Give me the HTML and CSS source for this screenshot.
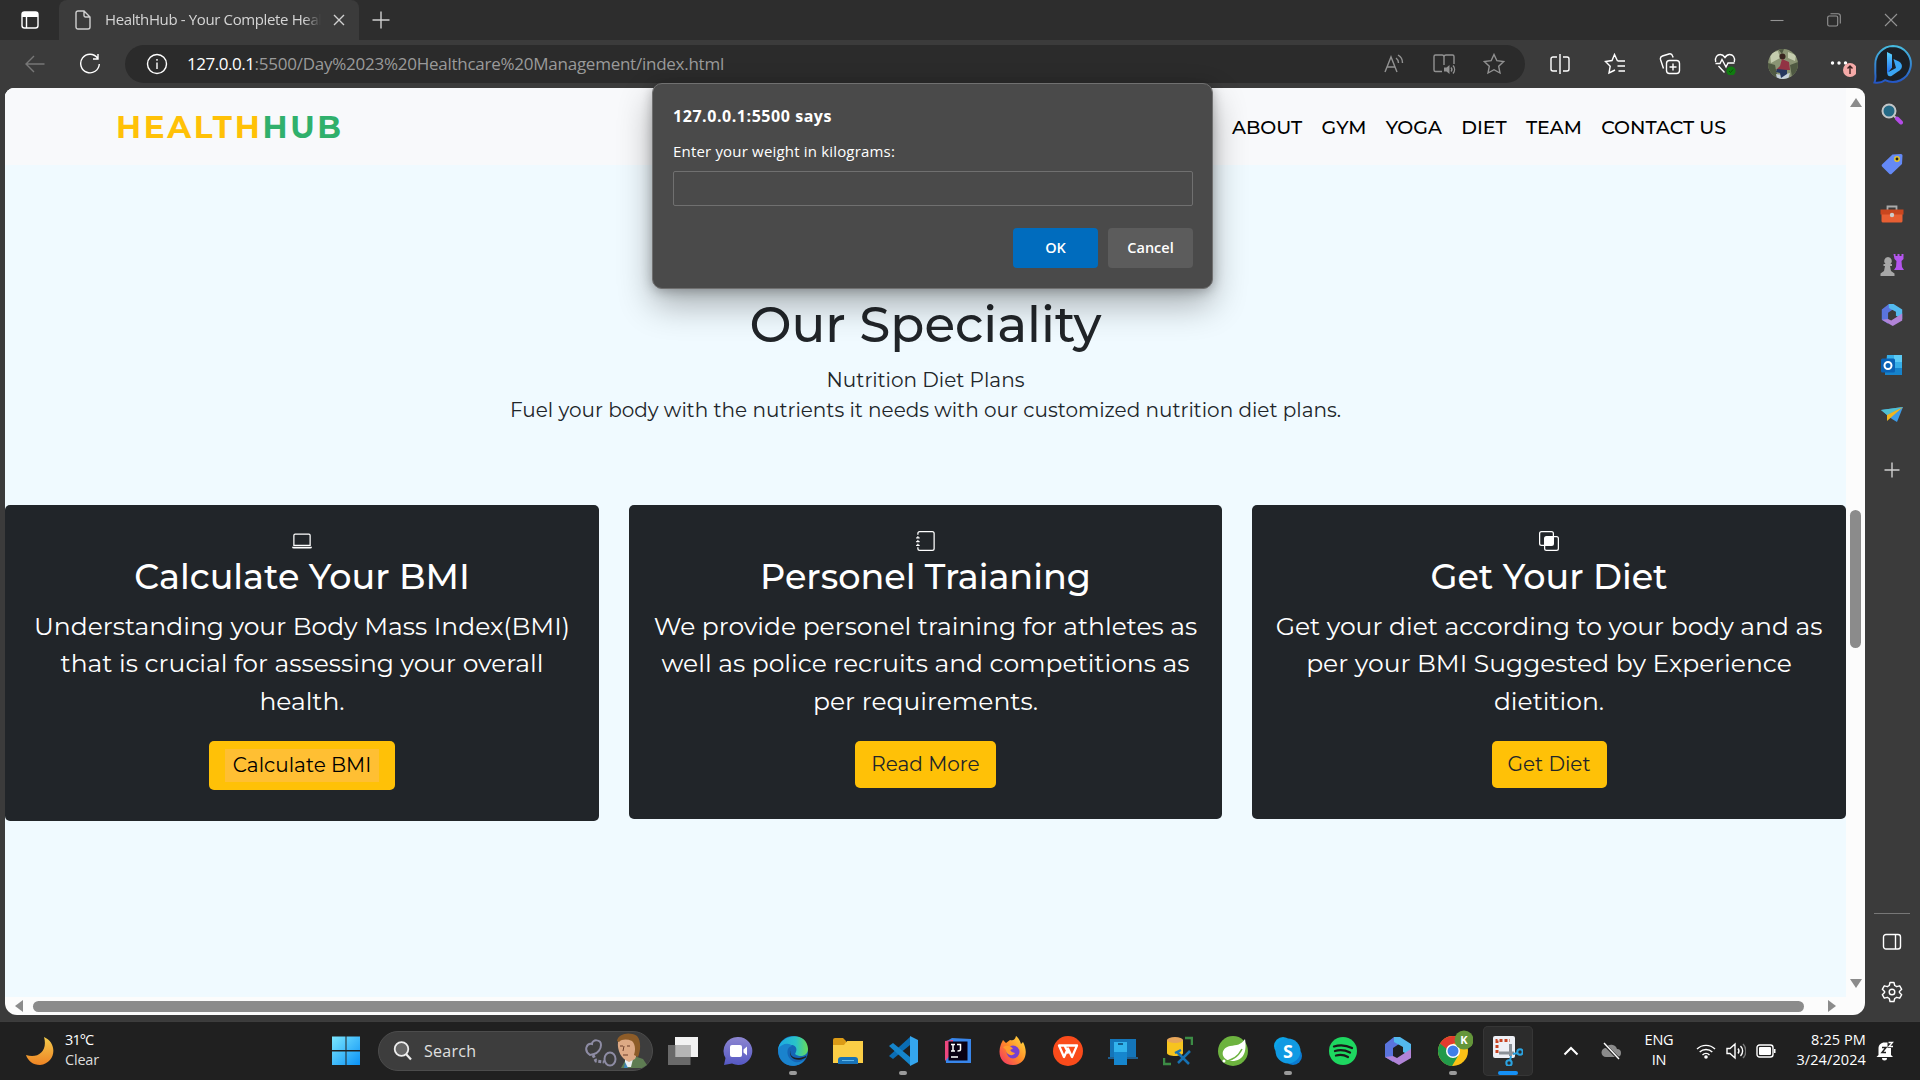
FILE: index.html
```html
<!DOCTYPE html>
<html lang="en">
<head>
<meta charset="utf-8">
<title>HealthHub - Your Complete Health Partner</title>
<link rel="stylesheet" href="styles.css">
</head>
<body>
<div class="tabs">
  <div class="tab-menu"><svg width="20" height="20" viewBox="0 0 20 20"><rect x="2" y="2" width="16" height="16" rx="2.5" class="ln"/><path d="M2 2h16v5H2z" fill="#fff"/><path d="M6.500 6v12" class="ln"/></svg></div>
  <div class="tab">
    <svg width="16" height="20" viewBox="0 0 16 20"><path d="M3 1h6l6 6v10a2 2 0 0 1-2 2H3a2 2 0 0 1-2-2V3a2 2 0 0 1 2-2zM9 1v4.500a1.500 1.500 0 0 0 1.500 1.500H15" class="ln soft"/></svg>
    <span class="tab-title">HealthHub - Your Complete Heal</span>
    <svg width="12" height="12" viewBox="0 0 12 12"><path d="M1 1l10 10M11 1L1 11" class="ln soft"/></svg>
  </div>
  <svg class="tab-new" width="18" height="18" viewBox="0 0 18 18"><path d="M9 .5v17M.5 9h17" class="ln soft"/></svg>
  <div class="win">
    <svg width="14" height="14" viewBox="0 0 14 14"><path d="M.5 7.500h13" class="ln dim"/></svg>
    <svg width="14" height="14" viewBox="0 0 14 14"><rect x=".7" y="3" width="10" height="10" rx="1.500" class="ln dim"/><path d="M3.500.7h7.500a2.300 2.300 0 0 1 2.300 2.300v7.500" class="ln dim"/></svg>
    <svg width="14" height="14" viewBox="0 0 14 14"><path d="M1 1l12 12M13 1L1 13" class="ln dim"/></svg>
  </div>
</div>
<div class="bar">
  <div class="slot back-slot"><svg width="20" height="18" viewBox="0 0 20 18"><path d="M19.500 9H1M9 1L1 9l8 8" class="ln off"/></svg></div>
  <div class="slot reload-slot"><svg width="22" height="22" viewBox="0 0 22 22"><path d="M18.500 5A9.300 9.300 0 1 0 20.300 11M19 1v5h-5" class="ln"/></svg></div>
  <div class="address">
    <svg width="22" height="22" viewBox="0 0 22 22"><circle cx="11" cy="11" r="9.500" class="ln"/><path d="M11 9.500V16M11 6v1.800" class="ln"/></svg>
    <span class="url"><span class="host">127.0.0.1</span>:5500/Day%2023%20Healthcare%20Management/index.html</span>
    <div class="slot a-slot"><svg width="20" height="20" viewBox="0 0 20 20"><path d="M1 18L7 3l6 15M3 13h8M12 4a6 6 0 0 1 2.500 5M14 1a9 9 0 0 1 4.500 8" class="ln grey"/></svg></div>
    <div class="slot a-slot"><svg width="24" height="22" viewBox="0 0 24 22"><path d="M12 3v9M10 18.500H3.500A1.500 1.500 0 0 1 2 17V3.500A1.500 1.500 0 0 1 3.500 2H10a2 2 0 0 1 2 2 2 2 0 0 1 2-2h6.500A1.500 1.500 0 0 1 22 3.500V11" class="ln grey"/><path d="M12 14.500h2.500l3-2.500v9l-3-2.500H12z" fill="#929292"/><path d="M19 14.500a3 3 0 0 1 0 4M21 12.500a6 6 0 0 1 0 8" class="ln grey"/></svg></div>
    <div class="slot a-slot"><svg width="22" height="22" viewBox="0 0 22 22"><path d="M11 1.500l2.900 6.200 6.800.9-5 4.700 1.300 6.700-6-3.300L5 20l1.300-6.700-5-4.700 6.800-.9z" class="ln grey"/></svg></div>
  </div>
  <div class="slot t-slot split"><svg width="20" height="20" viewBox="0 0 20 20"><path d="M10 0v20M7 3H3a2 2 0 0 0-2 2v10a2 2 0 0 0 2 2h4M13 3h4a2 2 0 0 1 2 2v10a2 2 0 0 1-2 2h-4" class="ln"/></svg></div>
  <div class="slot t-slot"><svg width="22" height="22" viewBox="0 0 22 22"><path d="M13.500 8L10.500 1.500 8 7.500l-6.500 1 4.700 4.700L5 20l4-2M13.500 8H21M13.500 13H21M14.500 18H21M9 18l2-1" class="ln"/></svg></div>
  <div class="slot t-slot"><svg width="22" height="22" viewBox="0 0 22 22"><rect x="7.500" y="7.500" width="13" height="13" rx="3" class="ln"/><path d="M14 10.500v7M10.500 14h7M4.500 15.500l-3-9A3 3 0 0 1 3.400 3l6.500-2a3 3 0 0 1 3.700 2l.5 1.500" class="ln"/></svg></div>
  <div class="slot t-slot"><svg width="22" height="22" viewBox="0 0 22 22"><path d="M1.700 9C.5 4 3.500 1.500 6.300 1.500 9 1.500 11 4.500 11 4.500s2-3 4.700-3C18.500 1.500 21.500 4 20.300 9M1.500 10.500H6l2-4 4 7.500 2-4h6.500M4.500 13l6 6.500" class="ln"/><circle cx="17" cy="18" r="4.600" fill="#107c10"/><path d="M15 18l1.500 1.500 2.500-3" fill="none" stroke="#0a4a0a"/></svg></div>
  <div class="slot av-slot"><svg width="30" height="30" viewBox="0 0 30 30"><clipPath id="av"><circle cx="15" cy="15" r="15"/></clipPath><g clip-path="url(#av)"><path fill="#8a9474" d="M0 0h30v30H0z"/><path fill="#c4ccae" d="M2 4l8-2 2 7-9 5zM20 3l8 3-1 6-7-3zM1 17l5-1 2 5-6 2z"/><path fill="#4f5942" d="M0 14l7 2 3 14H0zM22 16l8-3v12l-6 3zM10 0h6l-2 5z"/><path fill="#c7d2dc" d="M8 25l6 1 8-2-2 6H9z"/><circle cx="14.500" cy="7.500" r="3" fill="#38251f"/><path fill="#923344" d="M14 10l7 3 1 8-7 0-7 0 4-4z"/><path fill="#26375f" d="M9 20l10 1 0 4-6 4-1-5-4-1z"/></g></svg></div>
  <div class="slot dot-slot"><svg width="30" height="26" viewBox="0 0 30 26"><g fill="#fff"><circle cx="6.500" cy="12" r="1.700"/><circle cx="13" cy="12" r="1.700"/><circle cx="19.500" cy="12" r="1.700"/></g><circle cx="24" cy="19" r="7" fill="#f5aaa8"/><path d="M24 23v-8M21.500 17.500L24 15l2.500 2.500" fill="none" stroke="#3b2020" stroke-width="1.400"/></svg></div>
  <div class="slot bing-slot"><svg width="40" height="40" viewBox="0 0 40 40"><defs><linearGradient id="bg" x1="0" y1="0" x2="0" y2="1"><stop offset="0" stop-color="#47bce0"/><stop offset="1" stop-color="#2455c4"/></linearGradient><linearGradient id="bb" x1="0" y1="0" x2="0" y2="1"><stop offset="0" stop-color="#5ad5ff"/><stop offset="1" stop-color="#1f6af0"/></linearGradient></defs><path d="M20 2a18 18 0 1 1-8 34.200C9 38.500 5 39 1.500 38.500c1.500-3 1-6 .8-9.500V20A18 18 0 0 1 20 2z" fill="#1b2026" stroke="url(#bg)" stroke-width="2"/><path d="M14 8l5 2.500v13l-5 6.500z" fill="url(#bb)"/><path d="M20.500 15l5.500 2.500c5 3.500 3 8-1 10L18.500 32c-3 1-4.500-1-4-3.500l8.500-4.500z" fill="#3aa5f4"/></svg></div>
</div>
<div class="main">
  <div class="page">
    <div class="doc">
      <div class="navbar">
        <div class="logo">HEALTH<span>HUB</span></div>
        <div class="menu"><span>ABOUT</span><span>GYM</span><span>YOGA</span><span>DIET</span><span>TEAM</span><span>CONTACT US</span></div>
      </div>
      <div class="intro">
        <h1>Our Speciality</h1>
        <p>Nutrition Diet Plans</p>
        <p>Fuel your body with the nutrients it needs with our customized nutrition diet plans.</p>
      </div>
      <div class="cards">
        <div class="card">
          <svg width="20" height="20" viewBox="0 0 16 16" fill="#fff"><path d="M13.500 3a.5.5 0 0 1 .5.5V11H2V3.500a.5.5 0 0 1 .5-.5h11zm-11-1A1.500 1.500 0 0 0 1 3.500V12h14V3.500A1.500 1.500 0 0 0 13.500 2h-11zM0 12.500h16a1.500 1.500 0 0 1-1.500 1.500h-13A1.500 1.500 0 0 1 0 12.500z"/></svg>
          <h2>Calculate Your BMI</h2>
          <p>Understanding your Body Mass Index(BMI)<br>that is crucial for assessing your overall<br>health.</p>
          <div class="btn btn-bmi"><span class="mark">Calculate BMI</span></div>
        </div>
        <div class="card">
          <svg width="20" height="20" viewBox="0 0 16 16" fill="#fff"><path d="M3 0h10a2 2 0 0 1 2 2v12a2 2 0 0 1-2 2H3a2 2 0 0 1-2-2v-1h1v1a1 1 0 0 0 1 1h10a1 1 0 0 0 1-1V2a1 1 0 0 0-1-1H3a1 1 0 0 0-1 1v1H1V2a2 2 0 0 1 2-2z"/><path d="M1 5v-.5a.5.5 0 0 1 1 0V5h.5a.5.5 0 0 1 0 1h-2a.5.5 0 0 1 0-1H1zm0 3v-.5a.5.5 0 0 1 1 0V8h.5a.5.5 0 0 1 0 1h-2a.5.5 0 0 1 0-1H1zm0 3v-.5a.5.5 0 0 1 1 0v.5h.5a.5.5 0 0 1 0 1h-2a.5.5 0 0 1 0-1H1z"/></svg>
          <h2>Personel Traianing</h2>
          <p>We provide personel training for athletes as<br>well as police recruits and competitions as<br>per requirements.</p>
          <div class="btn btn-more">Read More</div>
        </div>
        <div class="card">
          <svg width="20" height="20" viewBox="0 0 16 16" fill="#fff"><path d="M0 2a2 2 0 0 1 2-2h8a2 2 0 0 1 2 2v2h2a2 2 0 0 1 2 2v8a2 2 0 0 1-2 2H6a2 2 0 0 1-2-2v-2H2a2 2 0 0 1-2-2V2zm12 3v5a2 2 0 0 1-2 2H5v2a1 1 0 0 0 1 1h8a1 1 0 0 0 1-1V6a1 1 0 0 0-1-1h-2zM2 1a1 1 0 0 0-1 1v8a1 1 0 0 0 1 1h2V6a2 2 0 0 1 2-2h5V2a1 1 0 0 0-1-1H2z"/></svg>
          <h2>Get Your Diet</h2>
          <p>Get your diet according to your body and as<br>per your BMI Suggested by Experience<br>dietition.</p>
          <div class="btn btn-diet">Get Diet</div>
        </div>
      </div>
    </div>
    <div class="vscroll"><i class="up"></i><i class="vthumb"></i><i class="down"></i></div>
    <div class="hscroll"><i class="left"></i><i class="hthumb"></i><i class="right"></i></div>
  </div>
  <div class="side">
    <div class="side-slot"><svg width="22" height="22" viewBox="0 0 22 22"><path d="M13 13l3 3" stroke="#bbb" stroke-width="2"/><path d="M16 15.500l4 4" stroke="#b44be8" stroke-width="4" stroke-linecap="round"/><circle cx="8" cy="8" r="6.500" fill="#256a86" stroke="#c3c6c8" stroke-width="2"/></svg></div>
    <div class="side-slot"><svg width="22" height="22" viewBox="0 0 22 22"><path d="M11.500 1.500L20 1a1.500 1.500 0 0 1 1.500 1.500L21 11 11 20.500a2 2 0 0 1-3 0L1.500 14a2 2 0 0 1 0-3z" fill="#6489f6"/><circle cx="16" cy="6" r="2.200" fill="#222" stroke="#e6c62c" stroke-width="1.500"/></svg></div>
    <div class="side-slot"><svg width="24" height="20" viewBox="0 0 24 20"><path d="M7.500 6V2.500h9V6" fill="none" stroke="#aaa" stroke-width="1.800"/><rect x="1.500" y="6" width="21" height="12.500" rx="1.500" fill="#e85f33"/><path d="M.5 5.500h23v5H.5z" fill="#c9461f"/><circle cx="12" cy="11" r="2.200" fill="#ccc"/></svg></div>
    <div class="side-slot"><svg width="24" height="24" viewBox="0 0 24 24"><path d="M13.500 1h2v2h2V1h2v2h2V1h2v5l-2 2 .5 6 2 3h-10l2-3 .5-6-2-2z" fill="#b455ee"/><path d="M8 4a4 4 0 0 1 2.500 7H12v2h-2l1 5 3.500 2.500V23H.5v-2.500L4 18l1-5H3.500v-2H5.500A4 4 0 0 1 8 4z" fill="#a7a7a7"/></svg></div>
    <div class="side-slot"><svg width="22" height="24" viewBox="0 0 28 30"><path d="M10 1l-9 7v13l8 5V12l6-4z" fill="#5a74dd"/><path d="M10 1h6l11 7v12l-8-4v-5l-9-5z" fill="#53b9ee"/><path d="M27 13v9l-12 7-14-8 8-1 4 2 14-9z" fill="#b184d8"/></svg></div>
    <div class="side-slot"><svg width="22" height="22" viewBox="0 0 22 22"><path d="M6 1h15v19H4z" fill="#36aee8"/><path d="M13 1h8v7h-8z" fill="#5bcaf5"/><path d="M4 14h17v7H4z" fill="#1683cc"/><rect y="4.500" width="14" height="14" rx="1.500" fill="#0a62b5"/><circle cx="7" cy="11.500" r="3.500" fill="none" stroke="#fff" stroke-width="2"/></svg></div>
    <div class="side-slot"><svg width="22" height="18" viewBox="0 0 22 18"><path d="M0 4L22 1 16 16l-5-3z" fill="#3c9be8"/><path d="M0 4L22 1 6 9z" fill="#50c0d0"/><path d="M22 1L6 9v6l4-3.500z" fill="#f0b51e"/></svg></div>
    <div class="side-plus"><svg width="16" height="16" viewBox="0 0 16 16"><path d="M8 .5v15M.5 8h15" class="ln soft"/></svg></div>
    <div class="side-foot">
      <i class="rule"></i>
      <svg width="20" height="18" viewBox="0 0 20 18"><rect x="1.500" y="1.500" width="17" height="14.500" rx="2.500" class="ln"/><path d="M13.500 1.500V16" class="ln"/></svg>
      <svg width="22" height="22" viewBox="0 0 22 22"><circle cx="11" cy="11" r="2.800" class="ln"/><path d="M9 1.500h4l.7 3 2 1.200 3-.9 2 3.500-2.300 2.100v1.200l2.300 2.100-2 3.500-3-.9-2 1.200-.7 3H9l-.7-3-2-1.200-3 .9-2-3.500 2.300-2.100v-1.200L1.300 8.300l2-3.500 3 .9 2-1.200z" class="ln" stroke-linejoin="round"/></svg>
    </div>
  </div>
</div>
<div class="taskbar">
  <div class="weather">
    <svg width="28" height="28" viewBox="0 0 28 28"><defs><linearGradient id="mn" x1="0" y1="0" x2="0" y2="1"><stop offset="0" stop-color="#f3cb4c"/><stop offset="1" stop-color="#ef8424"/></linearGradient></defs><path d="M18 0C32 6 30 26 14 28 7 28 2 24 0 18c12 4 22-4 18-18z" fill="url(#mn)"/></svg>
    <div class="two"><b>31°C</b><span>Clear</span></div>
  </div>
  <div class="start"><svg width="30" height="30" viewBox="0 0 30 30"><defs><linearGradient id="wn" x1="0" y1="0" x2="1" y2="1"><stop offset="0" stop-color="#7be7ff"/><stop offset="1" stop-color="#0a91f5"/></linearGradient></defs><path d="M1 .5h13.500V14H1zM15.500.5H29V14H15.500zM1 15.500h13.500V29H1zM15.500 15.500H29V29H15.500z" fill="url(#wn)"/></svg></div>
  <div class="search">
    <svg width="20" height="20" viewBox="0 0 20 20"><circle cx="8.500" cy="8" r="6.800" fill="#666" stroke="#eee" stroke-width="1.800"/><path d="M13 13l5 5.500" stroke="#eee" stroke-width="2.200"/></svg>
    <span class="search-text">Search</span>
    <svg width="62" height="36" viewBox="0 0 62 36"><g fill="none" stroke="#8e8ca4" stroke-width="2"><path d="M5 22C-2 17 2 10 7 11c0-5 9-5 9 1 0 4-3 8-7 9z"/><ellipse cx="25" cy="26" rx="5.500" ry="6.500"/><path d="M8 22l3 6 8 1" stroke-dasharray="3 1.500" stroke-width="3"/></g><path d="M36 35l5-9 8-3 9 3 4 6-5 3z" fill="#5e7c52"/><path d="M40 26l9-4-3 12h-6z" fill="#e9edf0"/><path d="M40 29l3 6h-4z" fill="#3f86b8"/><path d="M33 9c4-7 14-7 18-3 3 6 2 14-1 20l-6 3c-8-3-12-12-11-20z" fill="#dda985"/><path d="M32 8c1-7 12-10 20-5 4 4 4 14 1 21l-4-2c2-6 1-11-2-14-5-2-10-2-13 1z" fill="#8d5c28"/><path d="M35 13h3M42 13h3M38 22h5M39 13l-1 5" stroke="#6b3d2b" fill="none"/></svg>
  </div>
  <div class="apps">
    <div class="app"><svg width="30" height="28" viewBox="0 0 30 28"><path d="M7 0h23v20H7z" fill="#f2f2f2"/><path d="M0 8h22.500v20H0z" fill="#777" opacity=".85"/><path d="M7.500 8h15v12h-15z" fill="#b5b5b5"/></svg></div>
    <div class="app"><svg width="30" height="30" viewBox="0 0 30 30"><defs><linearGradient id="ct" x1="0" y1="0" x2="0" y2="1"><stop offset="0" stop-color="#8d86d0"/><stop offset="1" stop-color="#5558c4"/></linearGradient></defs><path d="M15 1a14 14 0 1 1-6 26.500L1 29l1.500-7A14 14 0 0 1 15 1z" fill="url(#ct)"/><rect x="7" y="9" width="12" height="12" rx="2" fill="#fff"/><path d="M20.500 13.500L24 10.500v9l-3.500-3z" fill="#fff"/></svg></div>
    <div class="app"><svg width="30" height="30" viewBox="0 0 30 30"><defs><linearGradient id="ed"><stop offset="0" stop-color="#1ba7e6"/><stop offset=".6" stop-color="#2ac3c8"/><stop offset="1" stop-color="#68dc57"/></linearGradient></defs><circle cx="15" cy="15" r="15" fill="#1565b5"/><path d="M0 14C1-2 29-6 30 13c0 7-8 9-13 5 3-5 1-9-4-9C7 9 1 12 0 14z" fill="url(#ed)"/><path d="M0 13c3-5 11-7 14-3-7 1-6 13 3 16 4 1 8-1 11-4-6 12-28 11-28-9z" fill="#1a83cd"/><path d="M13 13c-3 7 4 12 15 7 1 1-1 2-1 2-9 5-18-1-14-9z" fill="#202020"/></svg><i></i></div>
    <div class="app"><svg width="30" height="28" viewBox="0 0 30 28"><path d="M0 3a2 2 0 0 1 2-2h8l3 3v8H0z" fill="#dc9b16"/><path d="M0 8l11 0 3-4h16v22H0z" fill="#fbce46"/><path d="M5 27v-4a3 3 0 0 1 3-3h14a3 3 0 0 1 3 3v4z" fill="#1873b8"/><path d="M9 23.500h12" stroke="#5fb7eb"/></svg></div>
    <div class="app"><svg width="30" height="30" viewBox="0 0 30 30"><path d="M1 20l21-19v8L5 23z" fill="#0b6db4"/><path d="M1 10l4-3 17 14v8z" fill="#1585cb"/><path d="M22 0l8 4v22l-8 4z" fill="#34a6ee"/></svg><i></i></div>
    <div class="app"><svg width="26" height="26" viewBox="0 0 26 26"><path d="M0 4L7 0l19 1v24H1z" fill="#3886eb"/><path d="M0 3l8-1v12l-8 9z" fill="#ed477f"/><path d="M3.500 3.500h19v19h-19z" fill="#090012"/><path d="M6 6.500h4M8 6.500V13M6 13h4M12 6.500h3.500v5q0 1.500-3 1.500M6 19h7" stroke="#fff" stroke-width="1.500" fill="none"/></svg></div>
    <div class="app"><svg width="30" height="30" viewBox="0 0 30 30"><defs><linearGradient id="ff" x1="1" y1="0" x2="0" y2="1"><stop offset="0" stop-color="#ffe642"/><stop offset=".5" stop-color="#ff8b28"/><stop offset="1" stop-color="#f12a6c"/></linearGradient></defs><path d="M3 8l2-4 3 3 4-3c3 1 5 0 6-4 3 2 4 5 5 8l2-2c6 11 2 23-10 23S-1 18 3 8z" fill="url(#ff)"/><circle cx="15" cy="16" r="6.500" fill="#7540d0"/><path d="M5 11c5-3 9 0 10 2-4 0-3 3 2 4-2 4-9 2-9-3z" fill="#ff9b2d"/></svg></div>
    <div class="app"><svg width="30" height="30" viewBox="0 0 30 30"><circle cx="15" cy="15" r="15" fill="#fa4b1b"/><path d="M6 9.500h18l-5 11.500-4-8.500-4 8.500zM11.500 9.500l4 8" fill="none" stroke="#fff" stroke-width="2.300" stroke-linejoin="round"/></svg></div>
    <div class="app"><svg width="30" height="28" viewBox="0 0 30 28"><path d="M2 2h26v18H2z" fill="#1475b9"/><path d="M0 20h30v2H0z" fill="#1e5f91"/><path d="M6 5h13v23H6z" fill="#32b3ed"/><path d="M6 15h13v13H6z" fill="#1686ce"/><path d="M10 7h5" stroke="#0b416d" stroke-width="1.500"/></svg></div>
    <div class="app"><svg width="30" height="30" viewBox="0 0 30 30"><path d="M4 4v13c0 4 16 4 16 0V4z" fill="#f7c41f"/><ellipse cx="12" cy="4" rx="8" ry="3" fill="#e7a65a"/><path d="M22 2h7v7M1 22v6h7" fill="none" stroke="#3c8c45" stroke-width="2.500"/><path d="M15 27l12-12M14 16l12 12M12 17l6-3" stroke="#1772b4" stroke-width="2.500"/></svg></div>
    <div class="app"><svg width="30" height="30" viewBox="0 0 30 30"><circle cx="15" cy="15" r="15" fill="#6db33f"/><path d="M27 3c2 12-1 22-13 22-12-1-12-13-2-15 7-1 11-1 15-7z" fill="#fff"/><path d="M5 25c9 0 15-4 19-12" fill="none" stroke="#6db33f" stroke-width="1.500"/><circle cx="6" cy="25" r="1.500" fill="#fff"/></svg></div>
    <div class="app"><svg width="28" height="28" viewBox="0 0 28 28"><circle cx="9" cy="9" r="9" fill="#0ba4e8"/><circle cx="19" cy="19" r="9" fill="#0b7bd2"/><circle cx="14" cy="14" r="12.500" fill="#109ae3"/><text x="14" y="20.500" text-anchor="middle" class="glyph skype">S</text></svg><i></i></div>
    <div class="app"><svg width="28" height="28" viewBox="0 0 28 28"><circle cx="14" cy="14" r="14" fill="#1ed760"/><path d="M5 9.500c6-2 12-1.500 18 1.500M6 14c5-1.500 10-1 15 1.500M7 18.500c4-1 8-.8 12 1.500" fill="none" stroke="#191919" stroke-width="2.300" stroke-linecap="round"/></svg></div>
    <div class="app"><svg width="28" height="30" viewBox="0 0 28 30"><path d="M10 1l-9 7v13l8 5V12l6-4z" fill="#5a74dd"/><path d="M10 1h6l11 7v12l-8-4v-5l-9-5z" fill="#53b9ee"/><path d="M27 13v9l-12 7-14-8 8-1 4 2 14-9z" fill="#b184d8"/></svg></div>
    <div class="app"><svg width="40" height="42" viewBox="0 0 40 42"><circle cx="20" cy="21" r="15" fill="#fbc116"/><path d="M20 21h-8L7 13.500A15 15 0 0 1 33 13.500H20z" fill="#e33b2e"/><path d="M7 13.500A15 15 0 0 0 19 36l6-10-5-2z" fill="#229a4a"/><circle cx="20" cy="21" r="7" fill="#fff"/><circle cx="20" cy="21" r="5.500" fill="#3f7ee8"/><circle cx="31" cy="10" r="9.500" fill="#64963a"/><text x="31" y="14" text-anchor="middle" class="glyph kay">K</text></svg><i></i></div>
    <div class="app active"><svg width="30" height="30" viewBox="0 0 30 30"><rect width="22" height="22" rx="2" fill="#eef0f6"/><path d="M4 17V4.500h13" fill="none" stroke="#c84322" stroke-width="3" stroke-dasharray="3 2"/><path d="M6 17h15M17.500 8v12" stroke="#8b9198" stroke-width="3"/><g fill="none" stroke="#2ba3e0" stroke-width="2"><circle cx="27" cy="16" r="2.700"/><circle cx="16" cy="27" r="2.700"/><path d="M20 18l5-1M18 20l-1 5"/></g></svg><i></i></div>
  </div>
  <div class="tray">
    <svg width="16" height="10" viewBox="0 0 16 10"><path d="M1.500 8.500L8 2l6.500 6.500" class="ln bold"/></svg>
    <svg width="20" height="18" viewBox="0 0 20 18"><path d="M5 15a4.500 4.500 0 0 1 0-9 6 6 0 0 1 11 1 4 4 0 0 1 0 8z" fill="#8b8b8b"/><path d="M2 1l16 16" stroke="#202020" stroke-width="3"/><path d="M3 1l15 16" class="ln"/></svg>
    <div class="two mid"><span>ENG</span><span>IN</span></div>
    <svg width="20" height="16" viewBox="0 0 20 16"><path d="M1 6a13 13 0 0 1 18 0M3.700 9a9 9 0 0 1 12.600 0M6.500 12a5 5 0 0 1 7 0" class="ln"/><circle cx="10" cy="14" r="1.800" fill="#fff"/></svg>
    <svg width="20" height="18" viewBox="0 0 20 18"><path d="M1 6.500h3L9 2v14l-5-4.500H1zM12 6.500a4 4 0 0 1 0 5M14.500 4a7 7 0 0 1 0 10" class="ln"/><path d="M17 2a10 10 0 0 1 0 14" class="ln off"/></svg>
    <svg width="20" height="14" viewBox="0 0 20 14"><rect x="1" y="1" width="16" height="12" rx="2.500" class="ln"/><rect x="3" y="3" width="12" height="8" rx="1" fill="#fff"/><path d="M18 5h1.500v4H18z" fill="#fff"/></svg>
    <div class="two end"><span>8:25 PM</span><span>3/24/2024</span></div>
    <svg width="18" height="20" viewBox="0 0 18 20"><path d="M2.500 14V7.500C2.500 4 5 1.500 8.500 1.500H15v12.500l2 2H.5zM6 17h5a2.500 2.500 0 0 1-5 0z" fill="#fff"/><path d="M6 6.500h4l-4 5h4" fill="none" stroke="#222" stroke-width="1.500"/><path d="M11.500 0H18v7h-6.500z" fill="#202020"/><path d="M12.500 1.500h4l-3.500 4H17" fill="none" stroke="#fff" stroke-width="1.300"/></svg>
  </div>
</div>
<div class="dialog">
  <strong>127.0.0.1:5500 says</strong>
  <label>Enter your weight in kilograms:</label>
  <div class="field"></div>
  <div class="actions"><div class="ok">OK</div><div class="cancel">Cancel</div></div>
</div>
</body>
</html>
```
FILE: styles.css
```css
* { box-sizing: border-box; }
body { margin: 0; width: 1920px; height: 1080px; overflow: hidden; display: grid; grid-template-rows: 40px 48px 933px 59px; background: #3b3b3b; color: #fff; font-family: "Open Sans", "Noto Sans", sans-serif; font-size: 15px; position: relative; }
svg { display: block; flex: none; }
p, h1, h2 { margin: 0; font-weight: inherit; }
.ln { fill: none; stroke: #fff; stroke-width: 1.4; }
.soft { stroke: #d0d0d0; }
.dim { stroke: #949494; stroke-width: 1.1; }
.grey { stroke: #929292; }
.off { stroke: #777; }
.bold { stroke-width: 2; }

.tabs { display: flex; align-items: center; background: #2d2d2d; }
.tab-menu { width: 59px; height: 40px; display: flex; align-items: center; justify-content: center; }
.tab { width: 300px; height: 40px; background: #3b3b3b; border-radius: 8px 8px 0 0; padding: 0 14px 0 16px; display: flex; align-items: center; }
.tab-title { width: 216px; margin: 0 12px 0 14px; padding-bottom: 2px; overflow: hidden; white-space: nowrap; color: #d5d5d5; letter-spacing: -.37px; -webkit-mask: linear-gradient(90deg, #000 92%, transparent); mask: linear-gradient(90deg, #000 92%, transparent); }
.tab-new { margin-left: 13px; }
.win { margin-left: auto; padding-right: 22px; display: flex; gap: 43px; }

.bar { display: flex; align-items: center; padding-bottom: 1px; }
.slot { display: flex; align-items: center; justify-content: center; flex: none; }
.back-slot { width: 70px; }
.reload-slot { width: 40px; margin-right: 15px; }
.address { width: 1400px; height: 38px; border-radius: 19px; background: #2b2b2b; display: flex; align-items: center; padding: 0 6px 0 21px; }
.url { flex: 1; margin-left: 19px; font-size: 17px; white-space: nowrap; color: #9a9a9a; letter-spacing: -.25px; }
.host { color: #fff; letter-spacing: -.46px; }
.a-slot { width: 50px; }
.t-slot { width: 55px; }
.split { margin-left: 7px; }
.av-slot { width: 62px; }
.dot-slot { width: 54px; }
.bing-slot { width: 50px; }

.main { display: flex; align-items: flex-start; }
.page { width: 1860px; height: 927px; margin-left: 5px; border-radius: 9px 9px 12px 12px; overflow: hidden; display: grid; grid-template: 909px 18px / 1841px 19px; background: #fcfcfc; }
.doc { background: #f0faff; color: #212529; font-family: Montserrat, Inter, sans-serif; }
.navbar { height: 77px; background: #f8f9fb; display: flex; align-items: center; justify-content: space-between; padding: 2px 120px 0 111px; }
.logo { font-size: 31px; font-weight: 700; color: #ffc107; white-space: nowrap; letter-spacing: 2.7px; padding-bottom: 1px; }
.logo span { color: #30b06c; }
.menu { display: flex; gap: 19.3px; font-size: 19px; font-weight: 500; color: #000; white-space: nowrap; }
.intro { padding-top: 130px; text-align: center; font-size: 20px; line-height: 30px; font-weight: 400; }
.intro h1 { font-size: 50px; line-height: 60px; font-weight: 500; margin-bottom: 10px; }
.cards { margin-top: 80px; display: grid; grid-template-columns: 594px 593px 594px; gap: 30px; align-items: start; }
.card { background: #212529; color: #fff; border-radius: 5px; padding: 26px 0 31px; display: flex; flex-direction: column; align-items: center; text-align: center; white-space: nowrap; }
.card h2 { font-size: 35px; line-height: 42px; font-weight: 500; margin: 5px 0 9.5px; }
.card p { font-size: 25px; line-height: 37.5px; margin-bottom: 21px; font-weight: 400; }
.btn { background: #ffc107; color: #212529; border-radius: 5px; height: 47px; display: flex; align-items: center; justify-content: center; font-size: 20px; padding-bottom: 1px; }
.btn-bmi { width: 186px; height: 49px; color: #000; padding: 0; }
.mark { background: #ffbf33; width: 154px; height: 33px; line-height: 33px; }
.btn-more { width: 141px; }
.btn-diet { width: 115px; }
.vscroll { display: flex; flex-direction: column; align-items: center; padding-top: 10px; }
.vscroll i, .hscroll i { display: block; flex: none; }
.up { border: 6px solid transparent; border-top: 0; border-bottom: 9px solid #8b8b8b; }
.vthumb { width: 11px; height: 138px; border-radius: 6px; background: #8b8b8b; margin: 403px 0 331px; }
.down { border: 6px solid transparent; border-bottom: 0; border-top: 9px solid #8b8b8b; }
.hscroll { grid-column: 1 / 3; display: flex; align-items: center; padding-left: 10px; }
.left { border: 6px solid transparent; border-left: 0; border-right: 8px solid #8b8b8b; }
.hthumb { width: 1771px; height: 11px; border-radius: 6px; background: #8b8b8b; margin: 0 24px 0 10px; }
.right { border: 6px solid transparent; border-right: 0; border-left: 8px solid #8b8b8b; }

.side { width: 55px; height: 933px; display: flex; flex-direction: column; align-items: center; padding: 1px 1px 0 0; }
.side-slot { height: 50.2px; display: flex; align-items: center; }
.side-plus { height: 60px; display: flex; align-items: center; }
.side-foot { margin-top: auto; padding-bottom: 18px; display: flex; flex-direction: column; align-items: center; }
.rule { width: 36px; height: 1px; background: #777; }
.side-foot svg { margin-top: 19px; }
.side-foot svg + svg { margin-top: 30px; }

.taskbar { background: #202020; border-top: 1px solid #3d3d3d; display: flex; align-items: center; }
.weather { width: 306px; padding-left: 26px; display: flex; gap: 11px; align-items: center; }
.two { display: flex; flex-direction: column; line-height: 20px; font-size: 14.5px; color: #ddd; padding-bottom: 1px; }
.two b { font-weight: 400; color: #fff; letter-spacing: -.9px; }
.weather .two { padding-bottom: 3px; }
.weather .two span { letter-spacing: -.2px; }
.start { margin-left: 25px; width: 47px; }
.search { width: 275px; height: 40px; border-radius: 20px; background: #3d3d3d; border: 1px solid #4c4c4c; padding: 0 5px 0 14px; display: flex; align-items: center; }
.search-text { flex: 1; padding-left: 11px; font-size: 16px; color: #e0e0e0; letter-spacing: .27px; }
.apps { display: flex; margin-left: 5px; }
.app { width: 50px; height: 50px; margin-right: 5px; display: flex; align-items: center; justify-content: center; position: relative; border-radius: 5px; }
.app svg { margin: -6px; }
.app i { position: absolute; bottom: 1px; width: 8px; height: 4px; border-radius: 2px; background: #9a9a9a; }
.active { background: #2c2c2c; box-shadow: inset 0 0 0 1px #363636; }
.app.active i { width: 20px; background: #1590f5; }
.glyph { fill: #fff; font-family: "Open Sans", sans-serif; font-weight: 700; }
.skype { font-size: 18px; }
.kay { font-size: 11px; }
.tray { display: flex; align-items: center; margin-left: 25px; }
.tray svg + svg { margin-left: 22px; }
.tray .two { color: #fff; letter-spacing: .1px; padding-bottom: 2px; }
.tray .mid { width: 28px; margin: 0 23px 0 24px; align-items: center; letter-spacing: -.25px; }
.tray .mid + svg + svg, .tray .mid + svg + svg + svg { margin-left: 10px; }
.end { width: 70px; margin: 0 10px 0 20px; align-items: flex-end; }

.dialog { position: absolute; left: 652px; top: 83px; width: 561px; height: 206px; border-radius: 10px; background: #4a4a4a; border: 1px solid #707070; box-shadow: 0 16px 34px rgba(0,0,0,.3), 0 2px 12px rgba(0,0,0,.25); padding: 20px 19px 0 20px; display: flex; flex-direction: column; white-space: nowrap; }
.dialog strong { font-size: 16px; line-height: 24px; font-weight: 700; letter-spacing: .55px; }
.dialog label { font-size: 15px; line-height: 24px; margin-top: 11px; letter-spacing: .18px; }
.field { height: 35px; margin-top: 8px; border: 1px solid #707070; border-radius: 2px; }
.actions { display: flex; justify-content: flex-end; gap: 10px; margin-top: 22px; font-size: 14.5px; font-weight: 600; }
.actions div { width: 85px; height: 40px; border-radius: 4px; display: flex; align-items: center; justify-content: center; background: #5c5c5c; padding-bottom: 1px; }
.actions .ok { background: #006cbe; }
```
